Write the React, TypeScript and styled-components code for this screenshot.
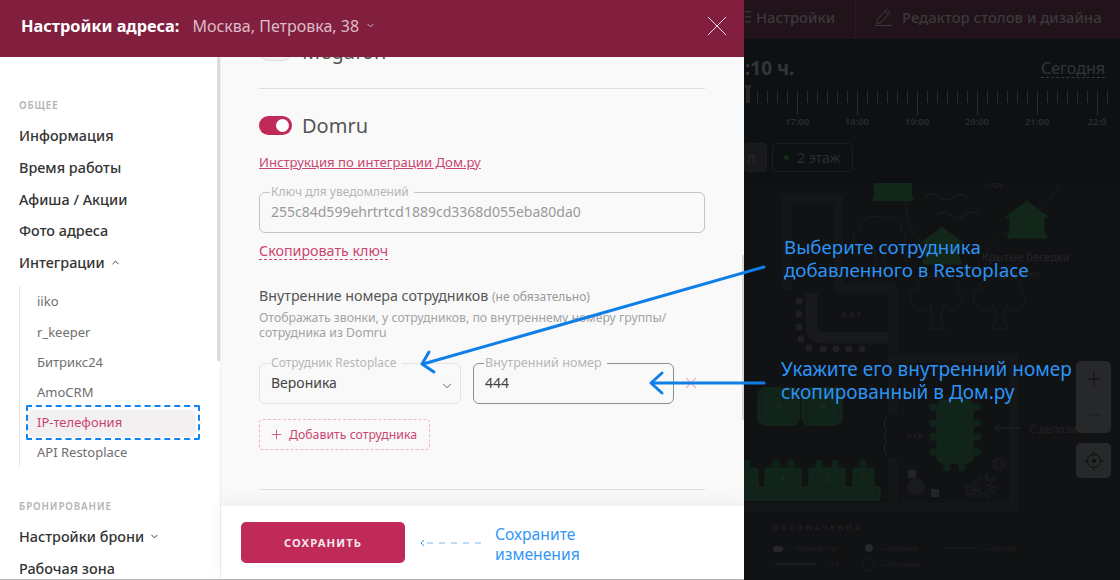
import React from "react";
import styled, { createGlobalStyle } from "styled-components";
import { ChevronDown, ChevronUp, Minus, Plus } from "lucide-react";

const GlobalStyle = createGlobalStyle`
  html, body {
    margin: 0;
    padding: 0;
    background: #101214;
  }
  * {
    box-sizing: border-box;
  }
  body {
    font-family: "Noto Sans", "Open Sans", sans-serif;
  }
`;

const Page = styled.div`
  position: relative;
  display: flex;
  width: 1120px;
  height: 580px;
  overflow: hidden;
`;

const Modal = styled.section`
  position: relative;
  z-index: 1;
  display: flex;
  flex-direction: column;
  flex: 0 0 744px;
  height: 580px;
  background: #fff;
  border-bottom: 1px solid #b5b5b5;
`;

const ModalHeader = styled.header`
  display: flex;
  align-items: center;
  flex: 0 0 57px;
  padding: 0 17px 6px 21px;
  background: #821f3f;
  color: #fff;
`;

const HeaderTitle = styled.h1`
  margin: 0 13px 0 0;
  font-size: 16.3px;
  font-weight: 700;
`;

const HeaderAddress = styled.span`
  display: flex;
  align-items: center;
  gap: 6px;
  flex: 1;
  font-size: 16px;
  color: #dcbcc7;
`;

const CloseButton = styled.svg`
  display: block;
  flex: 0 0 auto;
`;

const ModalBody = styled.div`
  display: flex;
  flex: 1;
  min-height: 0;
`;

const Sidebar = styled.nav`
  position: relative;
  flex: 0 0 221px;
  padding: 43px 0 0 19px;
  border-right: 1px solid #eeeeee;
  overflow: hidden;
`;

const SidebarThumb = styled.i`
  position: absolute;
  top: 0;
  right: 0;
  width: 3px;
  height: 304px;
  background: #dcdcdc;
`;

const SectionLabel = styled.div<{ $gap?: number }>`
  margin-top: ${(p) => p.$gap ?? 0}px;
  margin-bottom: 8px;
  height: 12px;
  font-size: 9.8px;
  line-height: 12px;
  font-weight: 600;
  letter-spacing: 0.9px;
  color: #b4b4b4;
`;

const NavItem = styled.div`
  display: flex;
  align-items: center;
  gap: 5px;
  height: 31.7px;
  font-size: 14.4px;
  font-weight: 500;
  color: #333;
`;

const SubNav = styled.div`
  margin-top: 8px;
  width: 181px;
  border-left: 1px solid #e4e4e4;
`;

const SubItem = styled.div<{ $active?: boolean }>`
  position: relative;
  isolation: isolate;
  display: flex;
  align-items: center;
  height: 30.1px;
  padding-left: 17px;
  font-size: 13px;
  color: ${(p) => (p.$active ? "#c9426f" : "#6e6e6e")};

  ${(p) =>
    p.$active &&
    `
    &::before {
      content: "";
      position: absolute;
      z-index: -1;
      left: 8px;
      right: 4px;
      top: 3px;
      bottom: 0;
      border-radius: 6px;
      background: #f3f0f2;
    }
    &::after {
      content: "";
      position: absolute;
      left: 6px;
      right: 0;
      top: -2px;
      bottom: -3px;
      border: 2px dashed #0f84f2;
      border-radius: 2px;
    }
  `}
`;

const Content = styled.main`
  position: relative;
  display: flex;
  flex-direction: column;
  flex: 1;
  min-width: 0;
  background: #f9f9f9;
`;

const ContentThumb = styled.i`
  position: absolute;
  top: 198px;
  right: 0;
  width: 2px;
  height: 165px;
  background: #d9d9d9;
`;

const ScrollArea = styled.div`
  flex: 1;
  min-height: 0;
  padding: 0 39px 0 38px;
  overflow: hidden;
`;

const SwitchRow = styled.div<{ $clipped?: boolean }>`
  display: flex;
  align-items: center;
  gap: 10px;
  height: 20px;
  margin-top: ${(p) => (p.$clipped ? "-16px" : "0")};
  font-size: 20px;
  color: #555;
`;

const Toggle = styled.span<{ $on?: boolean }>`
  position: relative;
  display: block;
  flex: 0 0 33px;
  height: 19px;
  border-radius: 10px;
  background: ${(p) => (p.$on ? "#c02a59" : "#f0f0f0")};
  border: ${(p) => (p.$on ? "none" : "1px solid #ddd")};

  ${(p) =>
    p.$on &&
    `
    &::after {
      content: "";
      position: absolute;
      top: 3px;
      right: 3px;
      width: 13px;
      height: 13px;
      border-radius: 50%;
      background: #fff;
    }
  `}
`;

const Divider = styled.hr<{ $top: number; $bottom: number }>`
  margin: ${(p) => p.$top}px 0 ${(p) => p.$bottom}px;
  border: 0;
  border-top: 1px solid #dedede;
`;

const GuideLink = styled.a`
  display: block;
  width: fit-content;
  margin-top: 18px;
  font-size: 13.15px;
  line-height: 18px;
  color: #cb4571;
  text-decoration: underline;
`;

const CopyLink = styled.a`
  display: block;
  width: fit-content;
  margin-top: 9px;
  font-size: 14.27px;
  line-height: 17px;
  color: #cb4571;
  border-bottom: 1px dashed #cb4571;
`;

const Field = styled.fieldset<{ $width: number; $strong?: boolean; $muted?: boolean; $top?: number }>`
  flex: 0 0 auto;
  width: ${(p) => p.$width}px;
  height: 48px;
  margin: ${(p) => p.$top ?? 0}px 0 0;
  padding: 0 11px;
  border: 1px solid ${(p) => (p.$strong ? "#8f8f8f" : p.$muted ? "#c4c4c4" : "#e3e3e3")};
  border-radius: 6px;
  display: flex;
  align-items: center;
  justify-content: space-between;
  font-size: 14px;
  line-height: 18px;
  color: ${(p) => (p.$muted ? "#9a9a9a" : "#444")};

  legend {
    margin-left: -1px;
    padding: 0 5px 0 1px;
    font-size: ${(p) => (p.$strong ? "12.6px" : "12px")};
    line-height: 14px;
    color: #b6b6b6;
  }

  span {
    margin-top: -7px;
  }
  svg {
    margin-top: -2px;
    margin-right: -5px;
    color: #555;
  }
`;

const GroupTitle = styled.div`
  margin-top: 27px;
  font-size: 14.25px;
  line-height: 18px;
  color: #555;

  small {
    font-size: 12px;
    color: #9a9a9a;
  }
`;

const GroupHint = styled.p`
  width: 440px;
  margin: 4px 0 0;
  font-size: 12.25px;
  line-height: 15px;
  color: #a3a3a3;
`;

const FieldRow = styled.div`
  display: flex;
  align-items: flex-end;
  gap: 12px;
  margin-top: 16px;
`;

const RemoveIcon = styled.svg`
  display: block;
  flex: 0 0 auto;
  align-self: center;
  margin: 6px 0 0 -1px;
`;

const AddButton = styled.div`
  display: flex;
  align-items: center;
  gap: 5px;
  width: 171px;
  height: 31px;
  margin-top: 15px;
  padding-left: 9px;
  border: 1px dashed #efb6c8;
  border-radius: 4px;
  font-size: 12.3px;
  color: #cb4571;
`;

const SaveBar = styled.footer`
  display: flex;
  align-items: center;
  flex: 0 0 73px;
  padding-left: 20px;
  background: #fff;
  box-shadow: 0 -4px 14px rgba(0, 0, 0, 0.05);
`;

const SaveButton = styled.div`
  display: flex;
  align-items: center;
  justify-content: center;
  width: 164px;
  height: 41px;
  border-radius: 5px;
  background: #c02a59;
  color: #f6e6ec;
  font-size: 11.2px;
  font-weight: 700;
  letter-spacing: 1.1px;
`;

const SaveArrow = styled.svg`
  display: block;
  flex: 0 0 auto;
  margin-left: 15px;
  margin-top: 1px;
`;

const SaveHint = styled.div`
  margin: 2px 0 0 -1px;
  font-size: 15.7px;
  line-height: 20px;
  color: #3297f5;
`;

const Backdrop = styled.div`
  display: flex;
  flex-direction: column;
  flex: 1;
  min-width: 0;
  background: #111214;
`;

const TopBar = styled.div`
  display: flex;
  align-items: center;
  flex: 0 0 39px;
  background: #211319;
  color: #3a393c;
  font-size: 14.8px;
  font-weight: 500;
`;

const TopBarItem = styled.div<{ $width: number; $divided?: boolean }>`
  display: flex;
  align-items: center;
  gap: ${(p) => (p.$divided ? "10px" : "5px")};
  flex: 0 0 ${(p) => p.$width}px;
  height: 100%;
  padding: 0 0 5px ${(p) => (p.$divided ? "19px" : "1px")};
  border-left: ${(p) => (p.$divided ? "1px solid #2a1a20" : "none")};
  white-space: nowrap;
`;

const Timeline = styled.div`
  flex: 0 0 144px;
  display: flex;
  flex-direction: column;
  background: #0e1113;
  color: #343537;
`;

const TimeHead = styled.div`
  display: flex;
  justify-content: space-between;
  height: 46px;
  padding: 17px 15px 0 0;
  font-size: 16px;
  line-height: 24px;

  b {
    margin-left: 1px;
    font-size: 19px;
    font-weight: 700;
  }
  a {
    height: 22px;
    line-height: 24px;
    border-bottom: 1px dashed #3a3a3c;
  }
`;

const ChipRow = styled.div`
  display: flex;
  gap: 5px;
  margin-top: 16px;
`;

const Chip = styled.div<{ $solid?: boolean }>`
  display: flex;
  align-items: center;
  gap: 8px;
  width: ${(p) => (p.$solid ? 23 : 81)}px;
  height: 29px;
  padding: 0 ${(p) => (p.$solid ? "2px" : "11px")};
  border: 1px solid #1a1c1d;
  border-radius: 4px;
  background: ${(p) => (p.$solid ? "#17191a" : "transparent")};
  font-size: 14px;
  color: #2b2c2d;
`;

const ChipDot = styled.i`
  width: 5px;
  height: 5px;
  border-radius: 50%;
  background: #122a17;
`;

const FloorPlan = styled.div`
  position: relative;
  flex: 1;
  min-height: 0;
`;

const MapControls = styled.div`
  position: absolute;
  top: 178px;
  right: 9px;
  display: flex;
  flex-direction: column;
  gap: 10px;
`;

const MapButton = styled.div<{ $tall?: boolean }>`
  display: flex;
  flex-direction: column;
  align-items: center;
  justify-content: space-around;
  width: 35px;
  height: ${(p) => (p.$tall ? 72 : 35)}px;
  border-radius: 5px;
  background: #27282a;
  color: #0d0e0f;
`;

const FadedMinus = styled(Minus)`
  color: #1b1c1e;
`;

const Callout = styled.div<{ $top: number; $left: number; $size: number }>`
  position: absolute;
  z-index: 2;
  top: ${(p) => p.$top}px;
  left: ${(p) => p.$left}px;
  font-size: ${(p) => p.$size}px;
  line-height: 23px;
  color: #2b94f5;
  white-space: nowrap;
`;

const ArrowLayer = styled.svg`
  position: absolute;
  z-index: 2;
  inset: 0;
  pointer-events: none;
`;

const hours = ["17:00", "18:00", "19:00", "20:00", "21:00", "22:0"];

const TimeRuler = () => {
  const ticks = Array.from({ length: 36 }, (_, i) => i);
  return (
    <svg width="376" height="42" viewBox="744 85 376 42">
      <rect x="746" y="85" width="4" height="18" fill="#262729" />
      <circle cx="748" cy="85" r="3.5" fill="#262729" />
      {ticks.map((i) => {
        const x = 757 + i * 10;
        const major = (x - 757) % 60 === 40;
        return <line key={i} x1={x + 0.5} x2={x + 0.5} y1="91" y2={major ? 115 : 103} stroke="#2a2c2e" />;
      })}
      {hours.map((h, i) => (
        <text key={h} x={797 + i * 60} y="125" fontSize="9.5" fontWeight="600" textAnchor="middle" fill="#2b2c2e">
          {h}
        </text>
      ))}
    </svg>
  );
};

const House = ({ x, y }: { x: number; y: number }) => (
  <g fill="#12261a" stroke="#142818">
    <path d={`M${x - 21} ${y} L${x} ${y - 16} L${x + 21} ${y} L${x + 17} ${y} V${y + 17} H${x - 17} V${y} Z`} />
    <rect x={x - 19} y={y + 17} width="38" height="4" />
  </g>
);

const Tree = ({ x, y }: { x: number; y: number }) => (
  <g fill="none" stroke="#1c1d1f">
    <path
      d={`M${x - 10} ${y + 8} C${x - 30} ${y + 8} ${x - 30} ${y - 12} ${x - 20} ${y - 14} C${x - 20} ${y - 26} ${x - 4} ${y - 30} ${x + 2} ${y - 24} C${x + 12} ${y - 30} ${x + 24} ${y - 22} ${x + 21} ${y - 12} C${x + 30} ${y - 6} ${x + 24} ${y + 8} ${x + 10} ${y + 8}`}
    />
    <path
      d={`M${x - 8} ${y + 26} C${x - 3} ${y + 18} ${x - 3} ${y + 12} ${x - 8} ${y} M${x + 8} ${y + 26} C${x + 3} ${y + 18} ${x + 3} ${y + 12} ${x + 8} ${y} M${x - 9} ${y + 26} H${x + 9}`}
    />
  </g>
);

const Seat = ({ x, y, r = 4 }: { x: number; y: number; r?: number }) => (
  <circle cx={x} cy={y} r={r} fill="#10231a" />
);

const TableRect = ({ x, y, w, h, n }: { x: number; y: number; w: number; h: number; n: string }) => (
  <g>
    <rect x={x} y={y} width={w} height={h} rx="2" fill="#11241a" stroke="#12291a" />
    <text x={x + w / 2} y={y + h / 2 + 2} fontSize="6" fill="#26352a" textAnchor="middle">
      {n}
    </text>
  </g>
);

const Bloom = ({ x, y, r }: { x: number; y: number; r: number }) => {
  const rays = Array.from({ length: 9 }, (_, i) => {
    const a = (i / 9) * Math.PI * 2;
    const b = a + Math.PI / 9;
    return `L${x + Math.cos(a) * r} ${y + Math.sin(a) * r} L${x + Math.cos(b) * r * 0.45} ${y + Math.sin(b) * r * 0.45}`;
  });
  return <path d={`M${x} ${y} ${rays.join(" ")} Z`} fill="none" stroke="#202123" strokeWidth="0.7" />;
};

const PlanDrawing = () => (
  <svg width="376" height="397" viewBox="744 183 376 397">
    {/* стены и барная стойка */}
    <g fill="none" stroke="#151618" strokeWidth="9">
      <path d="M787 290 V199.5 H838.5 V288 H892.5 V352" />
      <path d="M892.5 415 V358 H1013.5 V507.5 H744" />
      <path d="M892.5 507 V458" />
    </g>
    <path d="M811.5 293 V326 Q811.5 337.5 823 337.5 H888" fill="none" stroke="#18191b" strokeWidth="12" />
    <text x="853" y="317" fontSize="7" letterSpacing="3" fill="#262729" textAnchor="middle">
      БАР
    </text>
    {[
      [799, 301],
      [799, 314],
      [799, 327],
      [801, 339],
      [809, 348],
      [823, 349],
      [836, 349],
      [849, 349],
      [862, 349]
    ].map(([x, y]) => (
      <circle key={`${x}-${y}`} cx={x} cy={y} r="3.5" fill="#1f2022" />
    ))}
    {/* дорожка, домики и вода */}
    <path d="M905 190 C905 240 925 248 945 250 M985 255 C1000 225 1040 225 1060 183" fill="none" stroke="#1c1d1f" />
    <path d="M925 197 q7 -6 14 0 t14 0 t14 0 M937 215 q7 -6 14 0 t14 0 t14 0" fill="none" stroke="#1f2022" />
    <rect x="874" y="183" width="38" height="16" fill="#12261a" />
    <rect x="873" y="197" width="40" height="4" fill="#142818" />
    <House x={1027} y={217} />
    <House x={942} y={243} />
    <text x="987" y="187" fontSize="9" fill="#232426">
      ТЕХ
    </text>
    <text x="982" y="261" fontSize="11" fill="#252628">
      Крытые беседки
    </text>
    <text x="1001" y="276" fontSize="6.5" fill="#202123">
      по депозиту
    </text>
    <Tree x={880} y={243} />
    <Tree x={937} y={303} />
    <Tree x={1000} y={303} />
    {/* столы */}
    <rect x="758" y="388" width="41" height="37" rx="7" fill="#10221a" stroke="#122c1b" />
    <rect x="802" y="388" width="40" height="37" rx="7" fill="#10221a" stroke="#122c1b" />
    <TableRect x={767} y={388} w={22} h={36} n="15" />
    <TableRect x={811} y={388} w={22} h={36} n="16" />
    <rect x="937" y="400" width="36" height="63" rx="6" fill="#11241a" stroke="#12291a" />
    {[407, 423, 437, 452].flatMap((y) => [
      <Seat key={`l${y}`} x={933} y={y} />,
      <Seat key={`r${y}`} x={977} y={y} />
    ])}
    <Seat x={947} y={467} />
    <Seat x={962} y={467} />
    <text x="907" y="439" fontSize="7.5" letterSpacing="2" fill="#262729">
      VIP
    </text>
    <path d="M885 415 q2 3 0 6 t0 6 t0 6 t0 6 t0 6 t0 6 t0 6" fill="none" stroke="#232426" />
    <rect x="744" y="487" width="136" height="13" rx="2" fill="#10221a" stroke="#122c1b" />
    <TableRect x={744} y={468} w={14} h={22} n="" />
    <TableRect x={765} y={468} w={36} h={22} n="8" />
    <TableRect x={809} y={468} w={36} h={22} n="2" />
    <TableRect x={853} y={468} w={21} h={22} n="1" />
    {[776, 791, 819, 835, 863, 747].map((x) => (
      <Seat key={x} x={x} y={464} />
    ))}
    <circle cx="916" cy="487" r="9" fill="#191a1c" />
    <rect x="908" y="470" width="8" height="8" fill="#232426" />
    <rect x="931" y="489" width="8" height="8" fill="#232426" />
    <Bloom x={985} y={486} r={13} />
    <Bloom x={999} y={464} r={7} />
    <Bloom x={971} y={490} r={7} />
    {/* подпись депозита */}
    <path d="M995 428 H1021 M995 428 l5 -4 M995 428 l5 4" fill="none" stroke="#212224" />
    <text x="1029" y="433" fontSize="11" fill="#212224">
      С депози
    </text>
    {/* обозначения */}
    <text x="773" y="530" fontSize="7.5" fontWeight="600" letterSpacing="3" fill="#212224">
      ОБОЗНАЧЕНИЯ
    </text>
    <g fontSize="7" fill="#1f2022">
      <rect x="773" y="546" width="10" height="6" rx="3" fill="#262729" />
      <text x="787" y="551">— Барный стул</text>
      <circle cx="869" cy="548" r="4" fill="#262729" />
      <text x="880" y="551">— Колонка</text>
      <text x="984" y="551">— Штора</text>
      <text x="822" y="567">— TV</text>
      <text x="880" y="567">— Растения</text>
    </g>
    <path d="M775 564 H815" stroke="#262729" />
    <path d="M945 548 q3 -2 5 0 t5 0 t5 0 t5 0 t5 0 t5 0 t3 0" fill="none" stroke="#1f2022" />
    <circle cx="869" cy="565" r="6" fill="none" stroke="#1f2022" strokeDasharray="2 1" />
  </svg>
);

export default function App() {
  return (
    <Page>
      <GlobalStyle />
      <Modal>
        <ModalHeader>
          <HeaderTitle>Настройки адреса:</HeaderTitle>
          <HeaderAddress>
            Москва, Петровка, 38
            <ChevronDown size={11} strokeWidth={2} />
          </HeaderAddress>
          <CloseButton width="20" height="20" viewBox="0 0 20 20">
            <path d="M1 1 L19 19 M19 1 L1 19" stroke="#f1dfe5" strokeWidth="1" fill="none" />
          </CloseButton>
        </ModalHeader>
        <ModalBody>
          <Sidebar>
            <SidebarThumb />
            <SectionLabel>ОБЩЕЕ</SectionLabel>
            <NavItem>Информация</NavItem>
            <NavItem>Время работы</NavItem>
            <NavItem>Афиша / Акции</NavItem>
            <NavItem>Фото адреса</NavItem>
            <NavItem>
              Интеграции <ChevronUp size={11} strokeWidth={2} />
            </NavItem>
            <SubNav>
              <SubItem>iiko</SubItem>
              <SubItem>r_keeper</SubItem>
              <SubItem>Битрикс24</SubItem>
              <SubItem>AmoCRM</SubItem>
              <SubItem $active>IP-телефония</SubItem>
              <SubItem>API Restoplace</SubItem>
            </SubNav>
            <SectionLabel $gap={34}>БРОНИРОВАНИЕ</SectionLabel>
            <NavItem>
              Настройки брони <ChevronDown size={11} strokeWidth={2} />
            </NavItem>
            <NavItem>Рабочая зона</NavItem>
          </Sidebar>
          <Content>
            <ContentThumb />
            <ScrollArea>
              <SwitchRow $clipped>
                <Toggle />
                Megafon
              </SwitchRow>
              <Divider $top={27} $bottom={26} />
              <SwitchRow>
                <Toggle $on />
                Domru
              </SwitchRow>
              <GuideLink>Инструкция по интеграции Дом.ру</GuideLink>
              <Field $width={446} $muted $top={14}>
                <legend>Ключ для уведомлений</legend>
                <span>255c84d599ehrtrtcd1889cd3368d055eba80da0</span>
              </Field>
              <CopyLink>Скопировать ключ</CopyLink>
              <GroupTitle>
                Внутренние номера сотрудников <small>(не обязательно)</small>
              </GroupTitle>
              <GroupHint>
                Отображать звонки, у сотрудников, по внутреннему номеру группы/ сотрудника из Domru
              </GroupHint>
              <FieldRow>
                <Field $width={202}>
                  <legend>Сотрудник Restoplace</legend>
                  <span>Вероника</span>
                  <ChevronDown size={14} strokeWidth={1.5} />
                </Field>
                <Field $width={201} $strong>
                  <legend>Внутренний номер</legend>
                  <span>444</span>
                </Field>
                <RemoveIcon width="12" height="12" viewBox="0 0 12 12">
                  <path d="M1 1 L11 11 M11 1 L1 11" stroke="#eeb4c6" strokeWidth="1.3" fill="none" />
                </RemoveIcon>
              </FieldRow>
              <AddButton>
                <Plus size={15} strokeWidth={1.3} />
                Добавить сотрудника
              </AddButton>
              <Divider $top={39} $bottom={0} />
            </ScrollArea>
            <SaveBar>
              <SaveButton>СОХРАНИТЬ</SaveButton>
              <SaveArrow width="76" height="10" viewBox="0 0 76 10">
                <path d="M4 2 L1 5 L4 8" fill="none" stroke="#3297f5" />
                <path d="M7 5 H62" stroke="#7dbcf7" strokeDasharray="6 6" />
              </SaveArrow>
              <SaveHint>
                Сохраните
                <br />
                изменения
              </SaveHint>
            </SaveBar>
          </Content>
        </ModalBody>
      </Modal>
      <Backdrop>
        <TopBar>
          <TopBarItem $width={111}>
            <svg width="6" height="14" viewBox="0 0 6 14" fill="#333236">
              <rect y="1" width="6" height="1.5" />
              <rect y="6" width="6" height="1.5" />
              <rect y="11" width="6" height="1.5" />
            </svg>
            Настройки
          </TopBarItem>
          <TopBarItem $width={265} $divided>
            <svg width="17" height="18" viewBox="0 0 17 18" fill="none" stroke="#3a393c">
              <path d="M2 12 L11.5 1.5 L15 4.5 L5.5 15 L2 15.5 Z M10 3.5 L13.5 6.5" />
              <path d="M0 17.5 H17" />
            </svg>
            Редактор столов и дизайна
          </TopBarItem>
        </TopBar>
        <Timeline>
          <TimeHead>
            <b>:10 ч.</b>
            <a>Сегодня</a>
          </TimeHead>
          <TimeRuler />
          <ChipRow>
            <Chip $solid>л</Chip>
            <Chip>
              <ChipDot />2 этаж
            </Chip>
          </ChipRow>
        </Timeline>
        <FloorPlan>
          <PlanDrawing />
          <MapControls>
            <MapButton $tall>
              <Plus size={22} strokeWidth={1} />
              <FadedMinus size={22} strokeWidth={1} />
            </MapButton>
            <MapButton>
              <svg width="22" height="22" viewBox="0 0 22 22" fill="none" stroke="#0d0e0f">
                <circle cx="11" cy="11" r="6.5" />
                <circle cx="11" cy="11" r="1.5" fill="#0d0e0f" />
                <path d="M11 1 V5 M11 17 V21 M1 11 H5 M17 11 H21" />
              </svg>
            </MapButton>
          </MapControls>
        </FloorPlan>
      </Backdrop>
      <ArrowLayer width="1120" height="580" viewBox="0 0 1120 580">
        <g fill="none" stroke="#0f7fe8" strokeWidth="3" strokeLinecap="round" strokeLinejoin="round">
          <path d="M764 267 L423 364" />
          <path d="M429 352 L422 364 L434 372" />
          <path d="M764 383 L652 383" />
          <path d="M662 373 L651 383 L662 393" />
        </g>
      </ArrowLayer>
      <Callout $top={235} $left={784} $size={18.7}>
        Выберите сотрудника
        <br />
        добавленного в Restoplace
      </Callout>
      <Callout $top={358} $left={781} $size={19}>
        Укажите его внутренний номер
        <br />
        скопированный в Дом.ру
      </Callout>
    </Page>
  );
}
